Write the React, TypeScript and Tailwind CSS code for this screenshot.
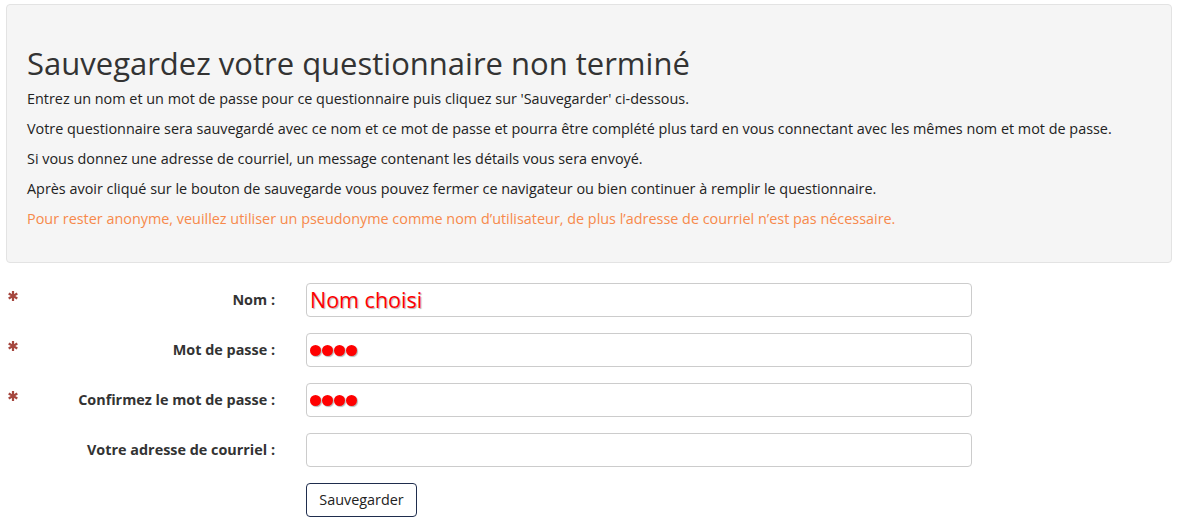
import React from 'react';

function Star() {
  return (
    <svg width="10" height="10" viewBox="0 0 10 10" className="text-[#a5473f]">
      <g stroke="currentColor" strokeWidth="2.2" strokeLinecap="butt">
        <line x1="5" y1="0" x2="5" y2="10" />
        <line x1="0.7" y1="2.5" x2="9.3" y2="7.5" />
        <line x1="0.7" y1="7.5" x2="9.3" y2="2.5" />
      </g>
    </svg>
  );
}

function Dots() {
  return (
    <div className="flex gap-[1px]">
      {[0, 1, 2, 3].map((i) => (
        <span key={i} className="block w-[11px] h-[11px] rounded-full bg-[#ff0000] shadow-[1px_1px_1px_rgba(0,0,0,0.3)]" />
      ))}
    </div>
  );
}

export default function App() {
  const rows = [
    { label: 'Nom :', required: true, value: 'Nom choisi', kind: 'text' },
    { label: 'Mot de passe :', required: true, value: '', kind: 'pwd' },
    { label: 'Confirmez le mot de passe :', required: true, value: '', kind: 'pwd' },
    { label: 'Votre adresse de courriel :', required: false, value: '', kind: 'text' },
  ];

  return (
    <div className="min-h-screen bg-white font-['Open_Sans',sans-serif] text-[#222]">
      <div className="ml-[6px] mt-[4px] w-[1166px] h-[259px] rounded border border-[#e3e3e3] bg-[#f5f5f5] px-[20px] pt-[38px]">
        <h1 className="text-[31px] leading-[40px] text-[#333] mb-[6px]">Sauvegardez votre questionnaire non terminé</h1>
        <div className="text-[14.4px] leading-[20px] space-y-[10px]">
          <p>Entrez un nom et un mot de passe pour ce questionnaire puis cliquez sur 'Sauvegarder' ci-dessous.</p>
          <p>Votre questionnaire sera sauvegardé avec ce nom et ce mot de passe et pourra être complété plus tard en vous connectant avec les mêmes nom et mot de passe.</p>
          <p>Si vous donnez une adresse de courriel, un message contenant les détails vous sera envoyé.</p>
          <p>Après avoir cliqué sur le bouton de sauvegarde vous pouvez fermer ce navigateur ou bien continuer à remplir le questionnaire.</p>
          <p className="text-[#f7894b]">Pour rester anonyme, veuillez utiliser un pseudonyme comme nom d’utilisateur, de plus l’adresse de courriel n’est pas nécessaire.</p>
        </div>
      </div>

      <div className="mt-[20px] flex flex-col gap-[16px]">
        {rows.map((r) => (
          <div key={r.label} className="flex items-center h-[34px]">
            <div className="w-[20px] pl-[8px] self-start pt-[8px]">{r.required && <Star />}</div>
            <label className="w-[255px] text-right text-[14.4px] font-bold text-[#333]">{r.label}</label>
            <div className="ml-[31px] w-[666px] h-[34px] rounded border border-[#ccc] bg-white px-[3px] flex items-center">
              {r.kind === 'text' && r.value && (
                <span className="text-[21.5px] text-[#ff0000] [text-shadow:1px_1px_1px_rgba(0,0,0,0.3)]">{r.value}</span>
              )}
              {r.kind === 'pwd' && <Dots />}
            </div>
          </div>
        ))}
        <div className="pl-[306px]">
          <button className="h-[34px] w-[111px] rounded border border-[#1f2d4d] bg-white text-[14.4px] text-[#222]">Sauvegarder</button>
        </div>
      </div>
    </div>
  );
}
